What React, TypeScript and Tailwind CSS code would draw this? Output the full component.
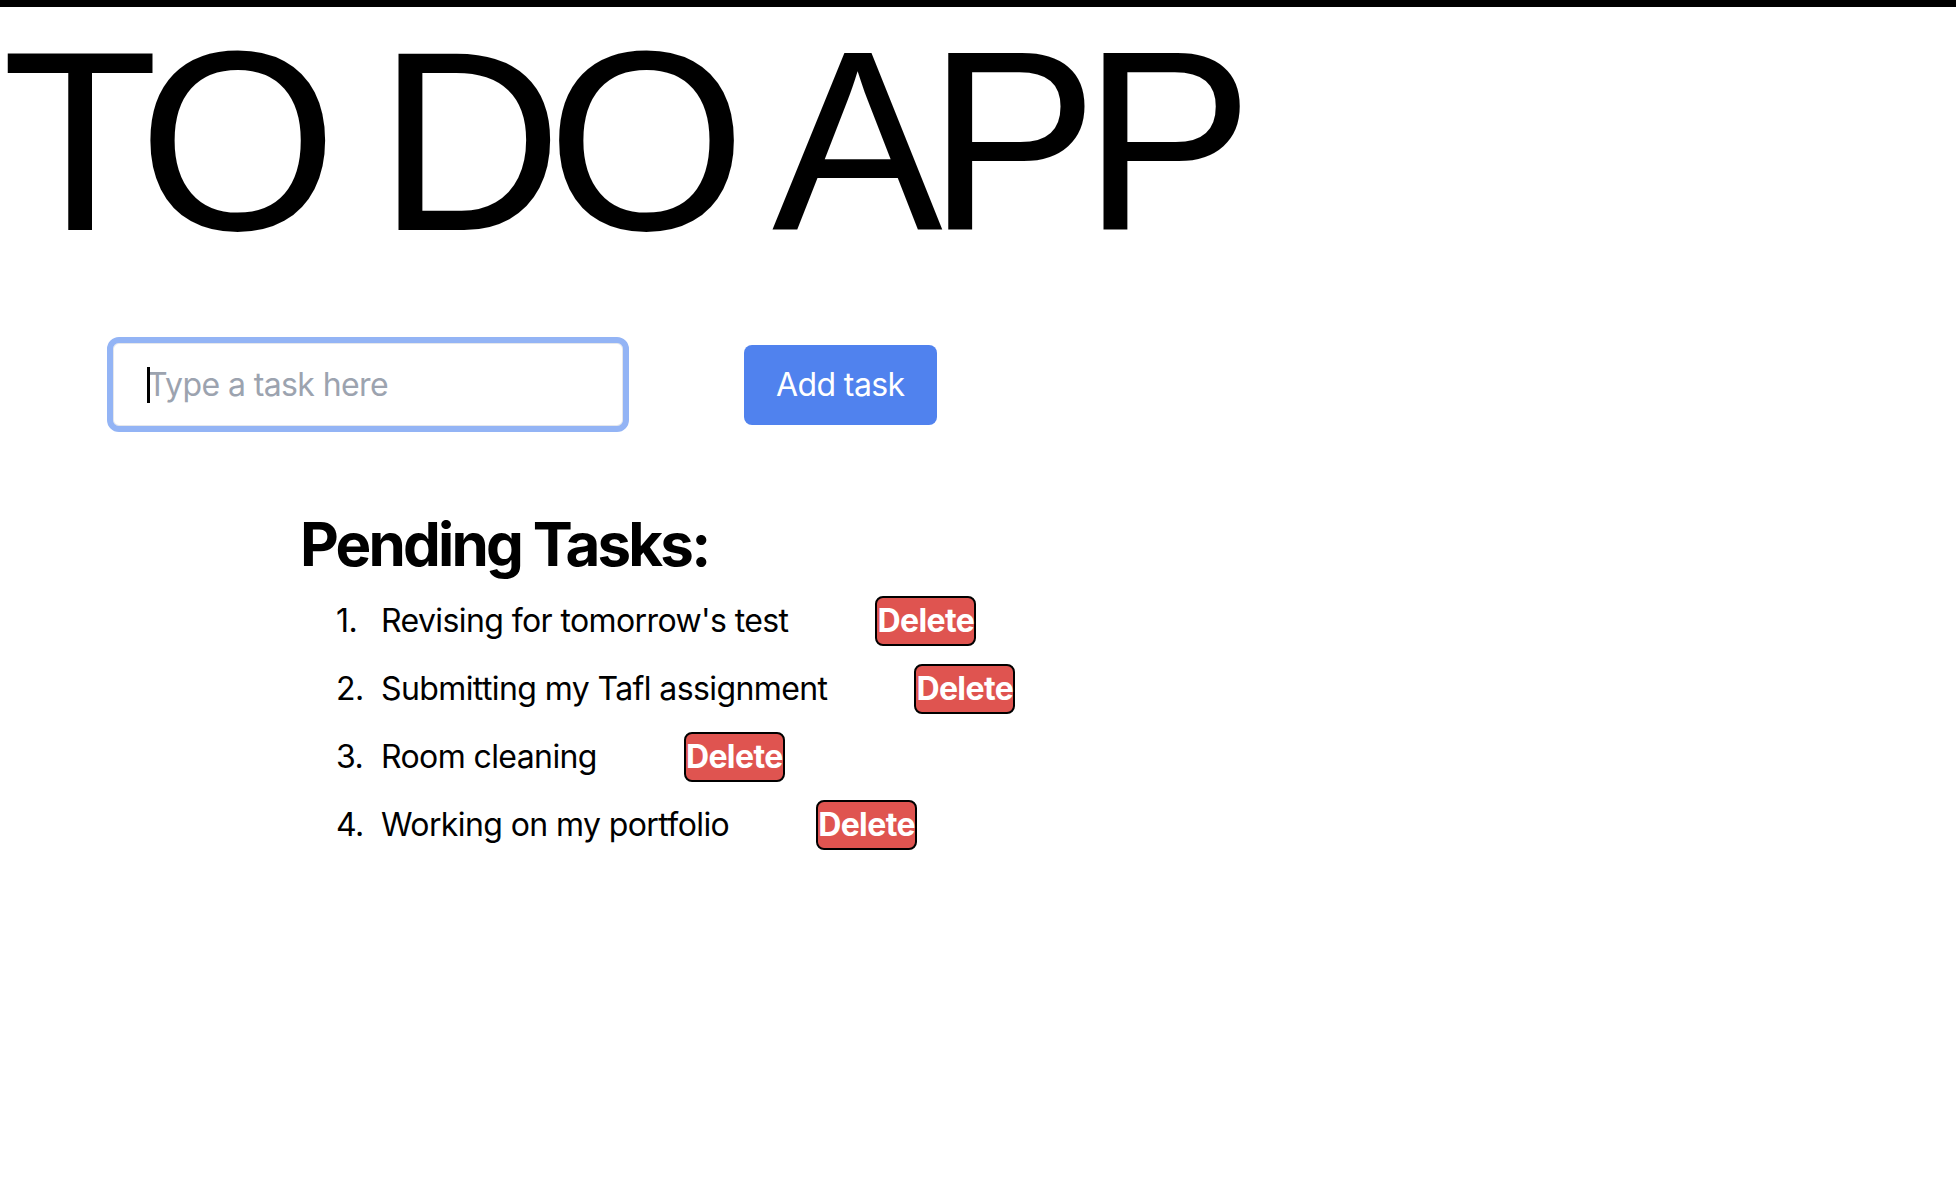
import React, { useState } from 'react';

const initialTasks = [
  "Revising for tomorrow's test",
  'Submitting my Tafl assignment',
  'Room cleaning',
  'Working on my portfolio',
];

export default function App() {
  const [tasks, setTasks] = useState<string[]>(initialTasks);
  const [newTask, setNewTask] = useState('');

  const addTask = () => {
    if (newTask.trim() === '') return;
    setTasks([...tasks, newTask.trim()]);
    setNewTask('');
  };

  const deleteTask = (index: number) => {
    setTasks(tasks.filter((_, i) => i !== index));
  };

  return (
    <div className="min-h-screen bg-white border-t-[7px] border-black text-black font-['Inter',sans-serif] tracking-[-0.6px]">
      <h1 className="text-[256px] leading-none font-normal tracking-[-15.5px] font-['Liberation_Sans',sans-serif] pl-[2px] pt-[6px]">
        TO DO APP
      </h1>

      <div className="flex items-center mt-[68px] pl-[107px]">
        <div className="relative">
          <input
            type="text"
            value={newTask}
            onChange={(e) => setNewTask(e.target.value)}
            placeholder="Type a task here"
            className="w-[522px] h-[95px] rounded-[12px] border-[6px] border-[#93b4f5] bg-white px-[34px] text-[32px] text-black placeholder:text-[#9ca3af] outline-none shadow-[inset_0_0_0_1px_#e5e7eb]"
          />
          {newTask === '' && (
            <span className="absolute left-[40px] top-[30px] h-[36px] w-[3px] bg-black" />
          )}
        </div>
        <button
          onClick={addTask}
          className="ml-[115px] h-[80px] px-[32px] rounded-[8px] bg-[#5082ee] text-white text-[32px]"
        >
          Add task
        </button>
      </div>

      <div className="pl-[300px] mt-[76px]">
        <h2 className="text-[60px] font-bold leading-[1.2] tracking-[-2.8px]">Pending Tasks:</h2>
        <ol className="mt-[16px] flex flex-col gap-[18px] pl-[36px]">
          {tasks.map((task, index) => (
            <li key={index} className="flex items-center text-[32px]">
              <span className="w-[45px]">{index + 1}.</span>
              <span>{task}</span>
              <button
                onClick={() => deleteTask(index)}
                className="ml-[87px] h-[50px] rounded-[8px] border-2 border-black bg-[#df5450] text-white font-bold text-[32px] leading-none"
              >
                Delete
              </button>
            </li>
          ))}
        </ol>
      </div>
    </div>
  );
}
